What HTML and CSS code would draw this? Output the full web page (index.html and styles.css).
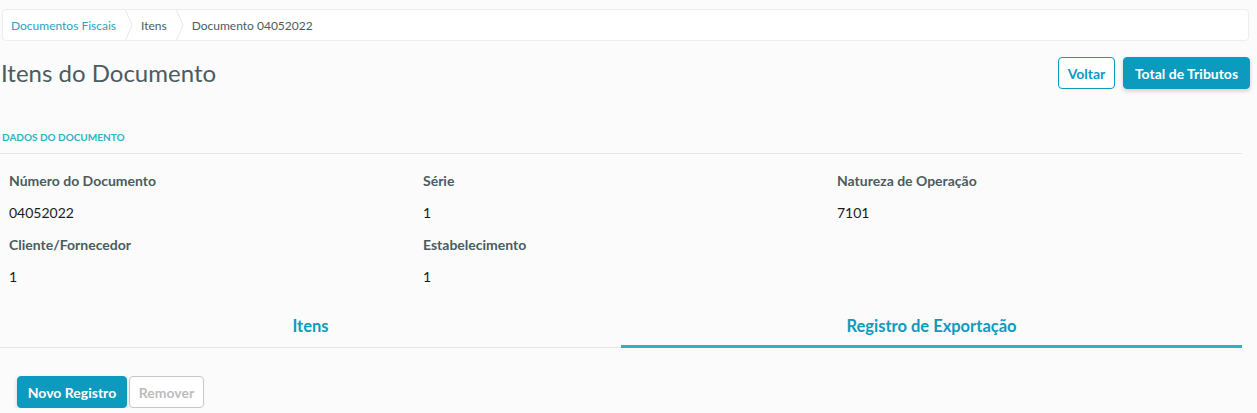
FILE: index.html
```html
<!DOCTYPE html>
<html lang="pt">
<head>
<meta charset="utf-8">
<title>Itens do Documento</title>
<link rel="stylesheet" href="styles.css">
</head>
<body>
<div class="page">
  <nav class="breadcrumb">
    <span class="crumb link">Documentos Fiscais</span>
    <svg class="sep" width="8" height="30" viewBox="0 0 8 30"><polyline points="0.5,0 7,15 0.5,30" fill="none" stroke="#e6e6e6" stroke-width="1"/></svg>
    <span class="crumb">Itens</span>
    <svg class="sep" width="8" height="30" viewBox="0 0 8 30"><polyline points="0.5,0 7,15 0.5,30" fill="none" stroke="#e6e6e6" stroke-width="1"/></svg>
    <span class="crumb current">Documento 04052022</span>
  </nav>

  <header class="header">
    <h1 class="title">Itens do Documento</h1>
    <div class="actions">
      <button class="btn btn-outline">Voltar</button>
      <button class="btn btn-primary">Total de Tributos</button>
    </div>
  </header>

  <section class="content">
    <div class="divider">DADOS DO DOCUMENTO</div>
    <div class="fields">
      <div class="field"><div class="label">Número do Documento</div><div class="value">04052022</div></div>
      <div class="field"><div class="label">Série</div><div class="value">1</div></div>
      <div class="field"><div class="label">Natureza de Operação</div><div class="value">7101</div></div>
      <div class="field"><div class="label">Cliente/Fornecedor</div><div class="value">1</div></div>
      <div class="field"><div class="label">Estabelecimento</div><div class="value">1</div></div>
    </div>

    <div class="tabs">
      <div class="tab">Itens</div>
      <div class="tab active">Registro de Exportação</div>
    </div>

    <div class="toolbar">
      <button class="btn btn-primary">Novo Registro</button>
      <button class="btn btn-disabled">Remover</button>
    </div>
  </section>
</div>
</body>
</html>
```

FILE: styles.css
```css
* { box-sizing: border-box; }
html, body {
  margin: 0;
  padding: 0;
  background: #fbfbfb;
  font-family: "Lato", "Noto Sans", sans-serif;
  color: #4a5c60;
}
.page {
  width: 1250px;
  padding-top: 9px;
}
.breadcrumb {
  margin-left: 2px;
  width: 1247px;
  height: 32px;
  background: #fff;
  border: 1px solid #ededed;
  border-radius: 4px;
  display: flex;
  align-items: center;
  font-size: 12px;
  padding-left: 8px;
}
.crumb { color: #4a5c60; }
.crumb.link { color: #2c9fc2; }
.sep { margin: 0 8px 0 9px; display: block; }
.header {
  display: flex;
  justify-content: space-between;
  align-items: flex-start;
  margin-top: 16px;
}
.title {
  margin: 0;
  padding-left: 1px;
  font-weight: 400;
  font-size: 24px;
  line-height: 32px;
  color: #4a5c60;
}
.actions { display: flex; gap: 8px; }
.btn {
  height: 32px;
  font-family: inherit;
  font-size: 14px;
  font-weight: 700;
  border-radius: 4px;
  padding: 0 8px;
  cursor: pointer;
}
.btn-outline {
  background: #fff;
  border: 1px solid #0c9abe;
  color: #0c9abe;
  width: 57px;
}
.btn-primary {
  background: #0c9abe;
  border: 1px solid #0c9abe;
  color: #fff;
  box-shadow: 0 2px 4px rgba(0,0,0,0.18);
}
.actions .btn-primary { width: 127px; }
.btn-disabled {
  background: #fff;
  border: 1px solid #c8c8c8;
  color: #bdbdbd;
  width: 75px;
}
.content { width: 1242px; }
.divider {
  margin-top: 42px;
  padding: 0 0 9px 2px;
  font-size: 10px;
  font-weight: 700;
  color: #29b6c5;
  border-bottom: 1px solid #e6e6e6;
  line-height: 13px;
}
.fields {
  display: grid;
  grid-template-columns: repeat(3, 1fr);
  row-gap: 0;
  padding-top: 18px;
}
.field { padding-left: 9px; }
.label {
  font-size: 14px;
  font-weight: 700;
  line-height: 18px;
  color: #4a5c60;
}
.value {
  font-size: 14px;
  line-height: 18px;
  color: #1c1c1c;
  margin-top: 14px;
  margin-bottom: 14px;
}
.tabs {
  display: flex;
  border-bottom: 1px solid #e6e6e6;
}
.tab {
  flex: 1;
  text-align: center;
  font-size: 16.5px;
  font-weight: 700;
  color: #0c9abe;
  height: 48px;
  margin-bottom: -1px;
  padding-top: 12px;
  line-height: 28px;
}
.tab.active {
  border-bottom: 3px solid #29b3c3;
}
.toolbar {
  display: flex;
  gap: 2px;
  padding-left: 17px;
  margin-top: 28px;
}
.toolbar .btn-primary { width: 110px; }
```
